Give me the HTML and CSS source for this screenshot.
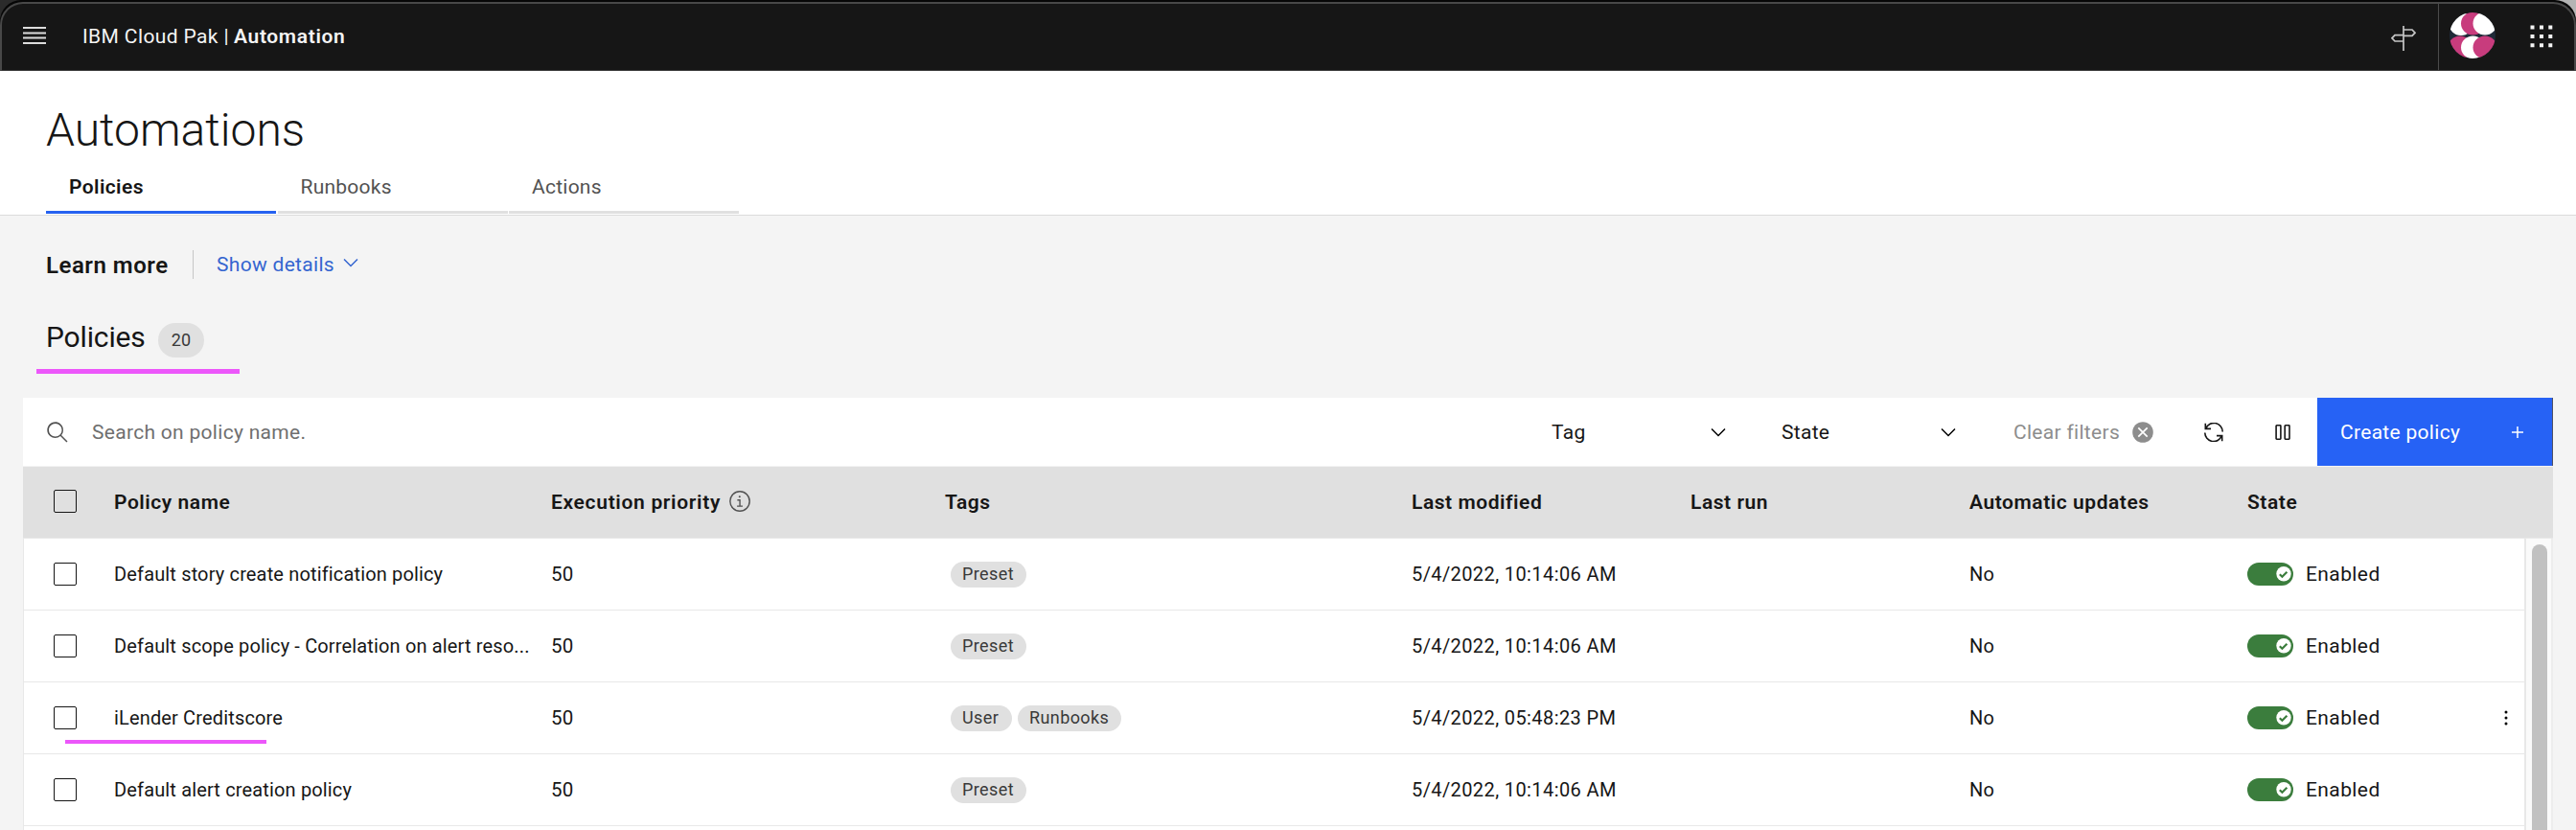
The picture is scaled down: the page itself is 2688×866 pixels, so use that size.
FILE: index.html
```
<!DOCTYPE html>
<html lang="en">
<head>
<meta charset="utf-8">
<title>IBM Cloud Pak | Automation</title>
<link rel="stylesheet" href="styles.css">
</head>
<body>
<svg width="0" height="0" class="defs">
  <symbol id="chev" viewBox="0 0 16 16"><path d="M8 11 3 6 3.7 5.3 8 9.6 12.3 5.3 13 6z"/></symbol>
  <symbol id="toggle" viewBox="0 0 48 24"><rect width="48" height="24" rx="12" fill="#3b7d3d"/><circle cx="38" cy="11.700" r="7.700" fill="#fff"/><path d="M33.800 12.200l2.600 2.500 5-5" fill="none" stroke="#3b7d3d" stroke-width="2.200"/></symbol>
</svg>
<div class="corners"><div class="edge">
<header class="topbar">
  <svg class="menu" viewBox="0 0 24 20"><path d="M0 1h24v2H0zM0 6.4h24v2H0zM0 11.6h24v2H0zM0 17h24v2H0z" fill="#dcdcdc"/></svg>
  <div class="brand"><span>IBM Cloud Pak |</span><b>Automation</b></div>
  <svg class="sign" viewBox="0 0 26 28" fill="none" stroke="#c6c6c6" stroke-width="1.7"><path d="M13 1v26M13 5h9l3 3.2-3 3.2h-9M13 10.6H4L1 13.8 4 17h9"/></svg>
  <div class="user"><svg viewBox="0 0 48 48"><defs><clipPath id="c"><circle cx="24" cy="24" r="24"/></clipPath></defs><g clip-path="url(#c)"><rect width="48" height="48" fill="#1f2a38"/><ellipse cx="11" cy="36.500" rx="12.500" ry="12" fill="#c83c7d"/><ellipse cx="24.500" cy="36.500" rx="12.500" ry="12" fill="#fff"/><ellipse cx="37" cy="36.500" rx="12.500" ry="12" fill="#c83c7d"/><ellipse cx="12" cy="12" rx="12.500" ry="12" fill="#fff"/><ellipse cx="24.500" cy="11.500" rx="12.500" ry="12" fill="#c83c7d"/><ellipse cx="37" cy="11.500" rx="12.500" ry="12" fill="#fff"/></g></svg></div>
  <svg class="apps" viewBox="0 0 24 24" fill="#f4f4f4"><path d="M.5.500h4v4h-4zM10 .5h4v4h-4zM19.300.5h4v4h-4zM.5 10h4v4h-4zM10 10h4v4h-4zM19.300 10h4v4h-4zM.5 19.300h4v4h-4zM10 19.300h4v4h-4zM19.300 19.300h4v4h-4z"/></svg>
</header>
</div></div>
<section class="head">
  <h1>Automations</h1>
  <nav class="tabs"><a class="on"><span>Policies</span></a><a><span>Runbooks</span></a><a><span>Actions</span></a></nav>
</section>
<main>
  <div class="learn"><b>Learn more</b><span class="link">Show details</span><svg class="chev blue"><use href="#chev"/></svg></div>
  <div class="policies"><h2>Policies</h2><span class="count">20</span></div>
  <div class="toolbar">
    <svg class="search" viewBox="0 0 16 16"><path d="M15 14.300 10.700 10c2-2.400 1.600-5.900-.7-7.900S4 .5 2.100 2.800s-1.600 5.900.7 7.900c2.100 1.700 5.100 1.700 7.200 0l4.300 4.300zM2 6.500C2 4 4 2 6.500 2S11 4 11 6.500 9 11 6.500 11 2 9 2 6.500z" fill="#525252"/></svg>
    <span class="ph">Search on policy name.</span>
    <div class="drop"><span>Tag</span><svg class="chev"><use href="#chev"/></svg></div>
    <div class="drop"><span>State</span><svg class="chev"><use href="#chev"/></svg></div>
    <div class="clear"><span>Clear filters</span><svg viewBox="0 0 22 22"><circle cx="11" cy="11" r="10.800" fill="#8d8d8d"/><path d="M6.300 6.300l9.400 9.400M15.700 6.300l-9.400 9.400" stroke="#fff" stroke-width="1.700"/></svg></div>
    <svg class="refresh" viewBox="0 0 20 20" fill="none" stroke="#161616" stroke-width="1.600"><path d="M1.300.8v5.600H7M1.800 6.200A9 9 0 0 1 19.200 9.500M18.700 19.200v-5.600H13M18.200 13.800A9 9 0 0 1 .8 10.500"/></svg>
    <svg class="pause" viewBox="0 0 16 16" fill="none" stroke="#161616" stroke-width="1.600"><rect x="1.100" y=".8" width="4.800" height="14.400" rx=".6"/><rect x="10.200" y=".8" width="4.800" height="14.400" rx=".6"/></svg>
    <div class="create"><span>Create policy</span><svg viewBox="0 0 12 12"><path d="M6 0v12M0 6h12" stroke="#fff" stroke-width="1.500"/></svg></div>
  </div>
  <div class="table">
    <div class="row th"><i class="box"></i><span class="t1">Policy name</span><span class="t2">Execution priority</span><svg class="info" viewBox="0 0 21 21"><circle cx="10.500" cy="10.500" r="9.700" fill="none" stroke="#525252" stroke-width="1.400"/><path d="M8 8.700h3.200v6H13.300V16H7.700v-1.300h2.200V10H8z" fill="#525252"/><circle cx="10.300" cy="5.900" r="1" fill="#525252"/></svg><span class="t3">Tags</span><span class="t4">Last modified</span><span class="t5">Last run</span><span class="t6">Automatic updates</span><span class="t7">State</span></div>
    <div class="body">
      <div class="rows">
        <div class="row"><i class="box"></i><span class="name">Default story create notification policy</span><span class="p">50</span><span class="tags"><em class="preset">Preset</em></span><span class="date">5/4/2022, 10:14:06 AM</span><span class="auto">No</span><svg class="tog"><use href="#toggle"/></svg><span class="en">Enabled</span></div>
        <div class="row"><i class="box"></i><span class="name">Default scope policy - Correlation on alert reso...</span><span class="p">50</span><span class="tags"><em class="preset">Preset</em></span><span class="date">5/4/2022, 10:14:06 AM</span><span class="auto">No</span><svg class="tog"><use href="#toggle"/></svg><span class="en">Enabled</span></div>
        <div class="row marked"><i class="box"></i><span class="name">iLender Creditscore</span><span class="p">50</span><span class="tags"><em class="usr">User</em><em class="rb">Runbooks</em></span><span class="date">5/4/2022, 05:48:23 PM</span><span class="auto">No</span><svg class="tog"><use href="#toggle"/></svg><span class="en">Enabled</span><svg class="dots" viewBox="0 0 4 16"><circle cx="2" cy="2" r="1.500"/><circle cx="2" cy="8" r="1.500"/><circle cx="2" cy="14" r="1.500"/></svg></div>
        <div class="row"><i class="box"></i><span class="name">Default alert creation policy</span><span class="p">50</span><span class="tags"><em class="preset">Preset</em></span><span class="date">5/4/2022, 10:14:06 AM</span><span class="auto">No</span><svg class="tog"><use href="#toggle"/></svg><span class="en">Enabled</span></div>
      </div>
      <div class="track"><div class="thumb"></div></div>
    </div>
  </div>
</main>
</body>
</html>
```
FILE: styles.css
```
* { box-sizing: border-box; }
body { margin: 0; width: 2688px; height: 866px; overflow: hidden; background: #f4f4f4; color: #161616; font: 21px/28px Roboto, "Liberation Sans", sans-serif; letter-spacing: .24px; }
span, b, em { white-space: nowrap; }
em, i { font-style: normal; }
b { font-weight: 600; }
svg { display: block; flex: none; }
.defs { position: absolute; }

.corners { background: linear-gradient(90deg, #2b2b2b 50%, #b4b4b4 50%); height: 74px; }
.edge { background: #060606; padding-top: 2px; border-radius: 22px 22px 0 0; }
.topbar { height: 72px; background: #161616; border: 2px solid #484848; border-bottom: 1px solid #393939; border-radius: 24px 24px 0 0; display: flex; align-items: center; padding-left: 22px; color: #f4f4f4; }
.menu { width: 24px; height: 20px; margin-bottom: 3px; }
.brand { margin-left: 38px; flex: 1; display: flex; gap: 5px; letter-spacing: .38px; padding-bottom: 2px; }
.brand b { letter-spacing: .65px; }
.sign { width: 26px; height: 28px; margin: 3px 23px 0 0; }
.user { height: 69px; border-left: 1px solid #4a4a4a; padding: 9px 36px 0 11px; }
.user svg { width: 48px; height: 48px; }
.apps { width: 24px; height: 24px; margin: 0 22px 2px 0; }

.head { height: 151px; background: #fff; border-bottom: 1px solid #dcdcdc; padding: 30px 48px 0; }
h1 { margin: 0; font-size: 48px; line-height: 64px; font-weight: 300; letter-spacing: 0; }
.tabs { display: flex; gap: 1.500px; margin-top: 2px; }
.tabs a { width: 240px; height: 53px; padding: 11px 24px 0; border-bottom: 3px solid #e0e0e0; color: #525252; }
.tabs .on { border-color: #2662f0; color: #161616; font-weight: 600; letter-spacing: .4px; }

main { padding: 0 24px; }
.learn { display: flex; align-items: center; height: 30px; margin: 36px 0 0 24px; }
.learn b { width: 153px; font-size: 24px; letter-spacing: .5px; padding-top: 2px; }
.link { border-left: 1px solid #c6c6c6; width: 153px; padding: 1px 0 1px 24px; color: #3465d0; letter-spacing: .3px; }
.chev { width: 24px; height: 24px; }
.blue { fill: #3465d0; margin-top: -4px; }
.policies { position: relative; display: flex; height: 124px; padding: 41px 0 0 24px; }
.policies h2 { margin: 0; width: 117px; font: 400 30px/40px Roboto, sans-serif; letter-spacing: -.15px; }
.count { width: 48px; height: 36px; margin-top: 5px; border-radius: 18px; background: #e0e0e0; color: #393939; font-size: 18px; line-height: 36px; text-align: center; }
.policies::after { content: ""; position: absolute; left: 14px; top: 94px; width: 212px; height: 5px; background: #ec57fa; }

.toolbar { height: 71px; background: #fff; display: flex; align-items: center; padding-left: 24px; }
.toolbar span { padding-top: 1px; letter-spacing: .3px; }
.search { width: 24px; height: 24px; }
.ph { width: 1523px; margin-left: 24px; color: #6f6f6f; }
.drop { display: flex; align-items: center; justify-content: space-between; width: 186px; margin-right: 54px; }
.clear { display: flex; align-items: center; justify-content: space-between; width: 146px; color: #8d8d8d; margin: 0 53px 0 2px; }
.clear svg { width: 22px; height: 22px; }
.refresh { width: 20px; height: 20px; margin-right: 54px; }
.pause { width: 16px; height: 16px; }
.create { margin-left: auto; width: 246px; height: 71px; padding: 0 30px 0 24px; background: #2662f5; border-right: 1px solid #4b4f66; color: #fff; display: flex; align-items: center; justify-content: space-between; }
.create svg { width: 12px; height: 12px; }

.row { display: flex; align-items: center; height: 75px; border-bottom: 1px solid #e8e8e8; background: #fff; padding-left: 32px; }
.th { margin-top: 1px; padding-bottom: 2px; background: #e0e0e0; font-weight: 600; letter-spacing: .55px; }
.th span { padding-top: 2px; }
.box { flex: none; width: 24px; height: 24px; border: 1.500px solid #161616; border-radius: 2px; margin-right: 39px; }
.t1 { width: 456px; } .t2 { width: 186px; letter-spacing: .68px; } .info { width: 22px; height: 22px; margin-right: 203px; }
.t3 { width: 487px; } .t4 { width: 291px; } .t5 { width: 291px; } .t6 { width: 290px; }
.body { display: flex; height: 304px; }
.rows { width: 2612px; height: 304px; background: #fff; border-right: 2px solid #e8e8e8; border-left: 1px solid #e8e8e8; }
.rows .row { padding-left: 31px; }
.name { width: 456px; font-size: 20px; letter-spacing: .15px; }
.p { width: 417px; font-size: 20.500px; }
.tags { width: 481px; display: flex; gap: 6px; }
em { height: 27px; line-height: 26px; border-radius: 13.500px; background: #e0e0e0; color: #393939; font-size: 18px; padding-left: 12px; letter-spacing: .4px; }
.preset { width: 79px; } .usr { width: 64px; } .rb { width: 108px; }
.date { width: 582px; font-size: 20px; letter-spacing: .4px; }
.auto { width: 290px; font-size: 20px; }
.tog { width: 48px; height: 24px; }
.en { margin-left: 13px; width: 207px; letter-spacing: .4px; }
.marked { position: relative; }
.marked::after { content: ""; position: absolute; left: 43px; top: 60px; width: 210px; height: 4px; background: #ec57fa; }
.dots { width: 4px; height: 16px; }
.track { width: 28px; height: 304px; overflow: hidden; background: #fafafa; border-right: 2px solid #ededed; padding: 6px 0 0 6px; }
.thumb { width: 16px; height: 298px; border-radius: 8px 8px 0 0; background: #c1c1c1; }
```
